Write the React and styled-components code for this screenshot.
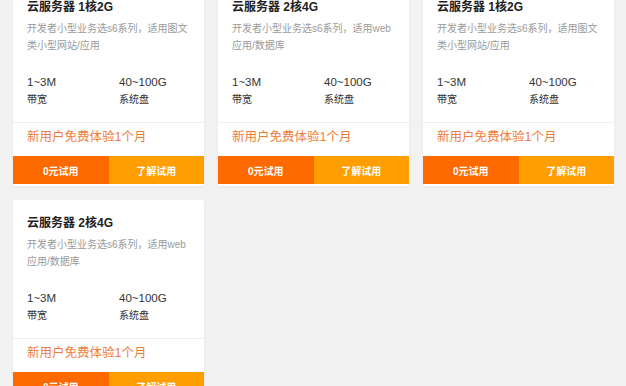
import styled, { createGlobalStyle } from 'styled-components'

const GlobalStyle = createGlobalStyle`
  html, body {
    margin: 0;
    padding: 0;
    background: #f2f2f2;
    font-family: "Liberation Sans", "Noto Sans CJK SC", sans-serif;
  }
`

const Page = styled.div`
  display: grid;
  grid-template-columns: repeat(3, 191px);
  column-gap: 14px;
  row-gap: 14px;
  padding: 0 0 20px 13px;
  margin-top: -16px;
`

const Card = styled.div`
  display: flex;
  flex-direction: column;
  height: 202px;
  background: #fff;
  box-shadow: 0 1px 3px rgba(0, 0, 0, 0.06);
  overflow: hidden;
`

const Body = styled.div`
  padding: 14px 14px 14px;
  border-bottom: 1px solid #eeeeee;
`

const Title = styled.div`
  font-size: 12px;
  line-height: 18px;
  font-weight: 700;
  color: #222;
`

const Desc = styled.div`
  margin-top: 4px;
  height: 34px;
  font-size: 10px;
  line-height: 17px;
  color: #9a9a9a;
`

const Specs = styled.div`
  display: grid;
  grid-template-columns: 92px 1fr;
  margin-top: 20px;
`

const Spec = styled.div`
  display: flex;
  flex-direction: column;
  gap: 2px;
`

const SpecValue = styled.div`
  font-size: 11.5px;
  line-height: 16px;
  color: #333;
`

const SpecLabel = styled.div`
  font-size: 10px;
  line-height: 16px;
  color: #333;
`

const Promo = styled.div`
  padding: 5px 14px 10px;
  font-size: 12.5px;
  line-height: 18px;
  color: #ef7d3a;
`

const Actions = styled.div`
  display: grid;
  grid-template-columns: 1fr 1fr;
  height: 28px;
`

const Action = styled.button`
  border: 0;
  margin: 0;
  padding: 0;
  font-family: inherit;
  font-size: 10px;
  font-weight: 700;
  color: #fff;
  background: ${(p) => (p.$primary ? '#ff6a00' : '#ff9e00')};
  cursor: pointer;
`

const plans = [
  { title: '云服务器 1核2G', desc: '开发者小型业务选s6系列，适用图文类小型网站/应用' },
  { title: '云服务器 2核4G', desc: '开发者小型业务选s6系列，适用web应用/数据库' },
  { title: '云服务器 1核2G', desc: '开发者小型业务选s6系列，适用图文类小型网站/应用' },
  { title: '云服务器 2核4G', desc: '开发者小型业务选s6系列，适用web应用/数据库' },
]

function PlanCard({ title, desc }) {
  return (
    <Card>
      <Body>
        <Title>{title}</Title>
        <Desc>{desc}</Desc>
        <Specs>
          <Spec>
            <SpecValue>1~3M</SpecValue>
            <SpecLabel>带宽</SpecLabel>
          </Spec>
          <Spec>
            <SpecValue>40~100G</SpecValue>
            <SpecLabel>系统盘</SpecLabel>
          </Spec>
        </Specs>
      </Body>
      <Promo>新用户免费体验1个月</Promo>
      <Actions>
        <Action $primary>0元试用</Action>
        <Action>了解试用</Action>
      </Actions>
    </Card>
  )
}

export default function App() {
  return (
    <>
      <GlobalStyle />
      <Page>
        {plans.map((p, i) => (
          <PlanCard key={i} {...p} />
        ))}
      </Page>
    </>
  )
}
